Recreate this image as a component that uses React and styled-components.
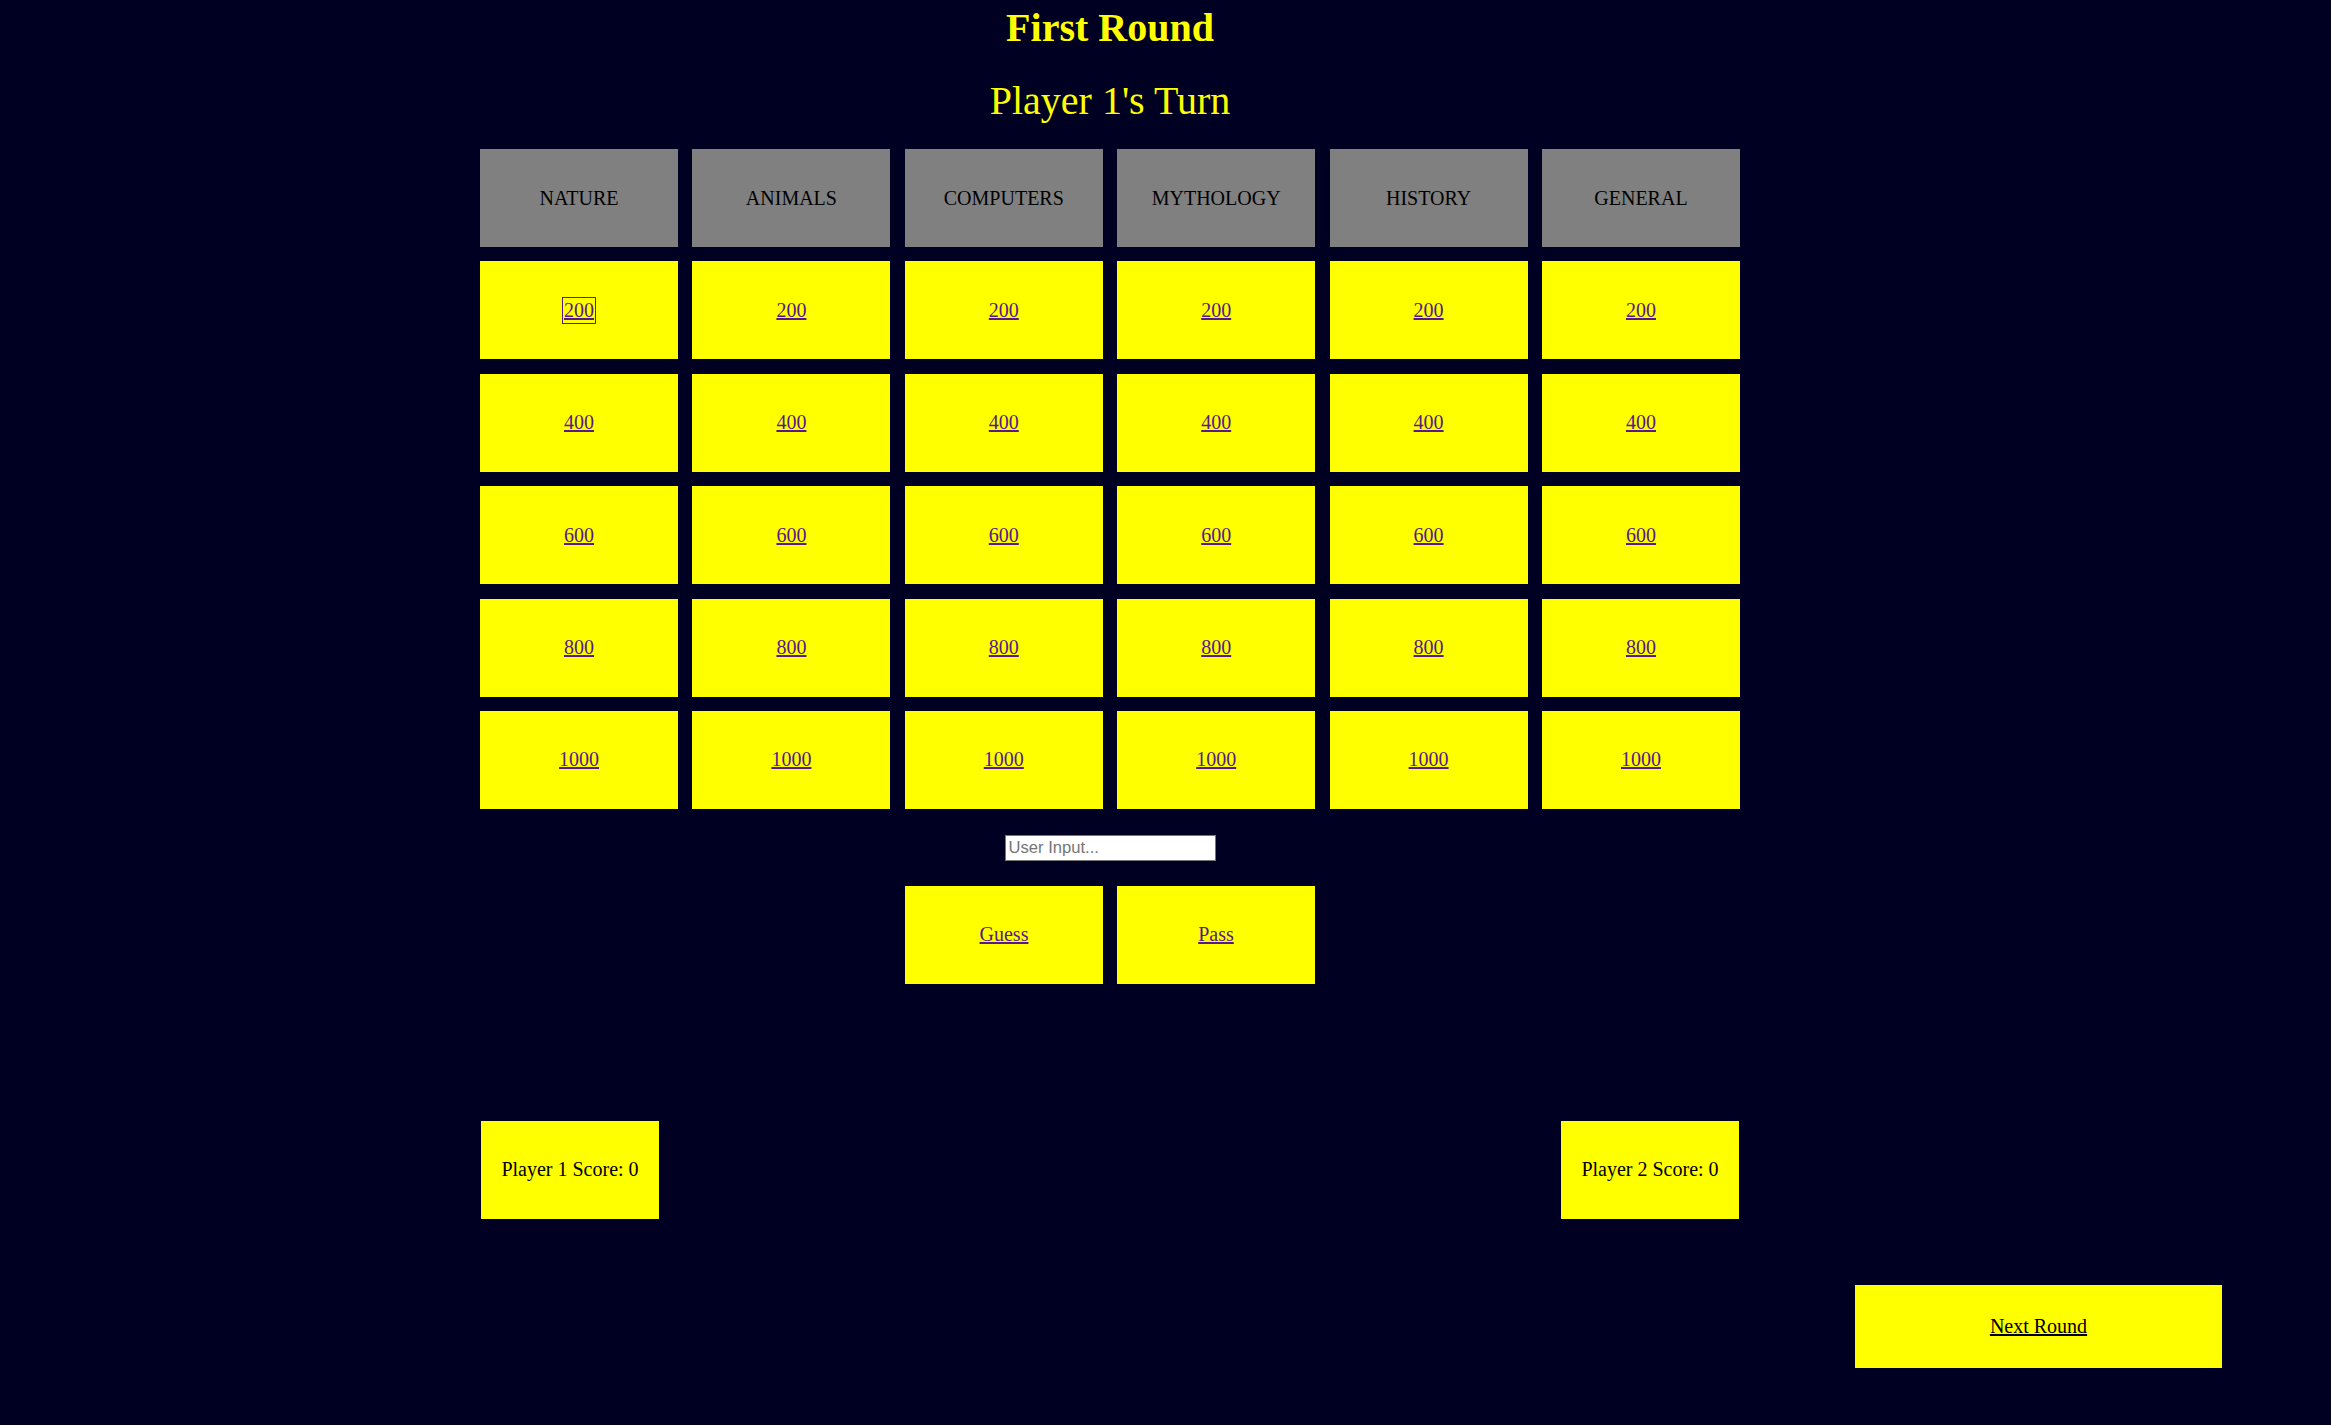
import React from 'react';
import styled, { createGlobalStyle } from 'styled-components';

const GlobalStyle = createGlobalStyle`
  html, body {
    margin: 0;
    padding: 0;
    background: #000022;
  }
  body {
    font-family: 'Liberation Serif', 'Times New Roman', serif;
    min-height: 1425px;
  }
`;

const Page = styled.div`
  width: 2220px;
  display: flex;
  flex-direction: column;
  align-items: center;
`;

const Title = styled.h1`
  margin: 5px 0 0;
  font-size: 40px;
  line-height: 46px;
  font-weight: ${(p) => (p.$bold ? 700 : 400)};
  color: #ffff00;
  text-align: center;
`;

const TurnTitle = styled(Title)`
  margin-top: 27px;
`;

const Board = styled.div`
  margin-top: 25px;
  display: grid;
  grid-template-columns: repeat(6, 198px);
  grid-auto-rows: 98px;
  column-gap: 14.4px;
  row-gap: 14.4px;
`;

const Cell = styled.div`
  display: flex;
  align-items: center;
  justify-content: center;
  background: ${(p) => (p.$header ? '#808080' : '#ffff00')};
  color: #000;
  font-size: 20px;
`;

const CellLink = styled.a`
  color: ${(p) => (p.$dark ? '#000' : '#551a8b')};
  text-decoration: underline;
  outline: ${(p) => (p.$focused ? '1px solid #551a8b' : 'none')};
  outline-offset: 1px;
  cursor: pointer;
`;

const AnswerInput = styled.input`
  margin-top: 26px;
  width: 211px;
  height: 26px;
  box-sizing: border-box;
  border: 1px solid #767676;
  padding: 1px 3px;
  font-family: 'Liberation Sans', Arial, sans-serif;
  font-size: 16.6px;
  background: #fff;
  &::placeholder {
    color: #757575;
  }
`;

const ActionRow = styled.div`
  margin-top: 25px;
  display: flex;
  gap: 14px;
`;

const ActionButton = styled(Cell)`
  width: 198px;
  height: 98px;
`;

const ScoreRow = styled.div`
  margin-top: 137px;
  width: 1258px;
  display: flex;
  justify-content: space-between;
`;

const ScoreBox = styled(Cell)`
  width: 178px;
  height: 98px;
`;

const FooterRow = styled.div`
  margin-top: 66px;
  width: 100%;
  display: flex;
  justify-content: flex-end;
`;

const NextButton = styled(Cell)`
  width: 367px;
  height: 83px;
  margin-right: -2px;
`;

const categories = ['NATURE', 'ANIMALS', 'COMPUTERS', 'MYTHOLOGY', 'HISTORY', 'GENERAL'];
const values = [200, 400, 600, 800, 1000];

export default function App() {
  return (
    <>
      <GlobalStyle />
      <Page>
        <Title $bold>First Round</Title>
        <TurnTitle>Player 1's Turn</TurnTitle>
        <Board>
          {categories.map((c) => (
            <Cell key={c} $header>
              {c}
            </Cell>
          ))}
          {values.map((v) =>
            categories.map((c, i) => (
              <Cell key={c + v}>
                <CellLink $focused={v === 200 && i === 0}>{v}</CellLink>
              </Cell>
            ))
          )}
        </Board>
        <AnswerInput placeholder="User Input..." />
        <ActionRow>
          <ActionButton>
            <CellLink>Guess</CellLink>
          </ActionButton>
          <ActionButton>
            <CellLink>Pass</CellLink>
          </ActionButton>
        </ActionRow>
        <ScoreRow>
          <ScoreBox>Player 1 Score: 0</ScoreBox>
          <ScoreBox>Player 2 Score: 0</ScoreBox>
        </ScoreRow>
        <FooterRow>
          <NextButton>
            <CellLink $dark>Next Round</CellLink>
          </NextButton>
        </FooterRow>
      </Page>
    </>
  );
}
